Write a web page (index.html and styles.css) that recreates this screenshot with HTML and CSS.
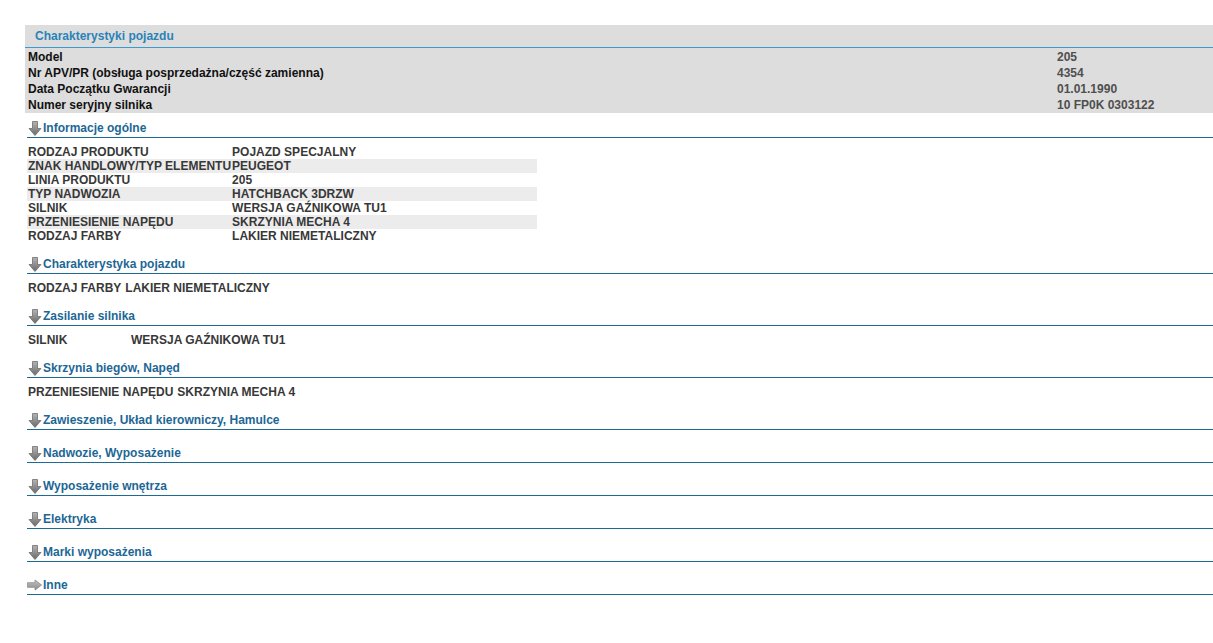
FILE: index.html
```html
<!DOCTYPE html>
<html lang="pl">
<head>
<meta charset="utf-8">
<title>Charakterystyki pojazdu</title>
<link rel="stylesheet" href="styles.css">
</head>
<body>
<div class="page">
  <div class="panel">
    <div class="panel-title">Charakterystyki pojazdu</div>
    <div class="panel-rows">
      <div class="pk">Model</div><div class="pv">205</div>
      <div class="pk">Nr APV/PR (obsługa posprzedażna/część zamienna)</div><div class="pv">4354</div>
      <div class="pk">Data Początku Gwarancji</div><div class="pv">01.01.1990</div>
      <div class="pk">Numer seryjny silnika</div><div class="pv">10 FP0K 0303122</div>
    </div>
  </div>

  <div class="section first">
    <div class="heading"><svg class="ico" viewBox="0 0 14 15"><use href="#down"/></svg><span>Informacje ogólne</span></div>
    <div class="body">
      <table class="data wide">
        <tr><td>RODZAJ PRODUKTU</td><td>POJAZD SPECJALNY</td></tr>
        <tr><td>ZNAK HANDLOWY/TYP ELEMENTU</td><td>PEUGEOT</td></tr>
        <tr><td>LINIA PRODUKTU</td><td>205</td></tr>
        <tr><td>TYP NADWOZIA</td><td>HATCHBACK 3DRZW</td></tr>
        <tr><td>SILNIK</td><td>WERSJA GAŹNIKOWA TU1</td></tr>
        <tr><td>PRZENIESIENIE NAPĘDU</td><td>SKRZYNIA MECHA 4</td></tr>
        <tr><td>RODZAJ FARBY</td><td>LAKIER NIEMETALICZNY</td></tr>
      </table>
    </div>
  </div>

  <div class="section">
    <div class="heading"><svg class="ico" viewBox="0 0 14 15"><use href="#down"/></svg><span>Charakterystyka pojazdu</span></div>
    <div class="body">
      <table class="data"><tr><td>RODZAJ FARBY</td><td class="gap">LAKIER NIEMETALICZNY</td></tr></table>
    </div>
  </div>

  <div class="section">
    <div class="heading"><svg class="ico" viewBox="0 0 14 15"><use href="#down"/></svg><span>Zasilanie silnika</span></div>
    <div class="body">
      <table class="data"><tr><td class="k103">SILNIK</td><td>WERSJA GAŹNIKOWA TU1</td></tr></table>
    </div>
  </div>

  <div class="section">
    <div class="heading"><svg class="ico" viewBox="0 0 14 15"><use href="#down"/></svg><span>Skrzynia biegów, Napęd</span></div>
    <div class="body">
      <table class="data"><tr><td>PRZENIESIENIE NAPĘDU</td><td class="gap">SKRZYNIA MECHA 4</td></tr></table>
    </div>
  </div>

  <div class="section">
    <div class="heading"><svg class="ico" viewBox="0 0 14 15"><use href="#down"/></svg><span>Zawieszenie, Układ kierowniczy, Hamulce</span></div>
    <div class="body empty"></div>
  </div>

  <div class="section">
    <div class="heading"><svg class="ico" viewBox="0 0 14 15"><use href="#down"/></svg><span>Nadwozie, Wyposażenie</span></div>
    <div class="body empty"></div>
  </div>

  <div class="section">
    <div class="heading"><svg class="ico" viewBox="0 0 14 15"><use href="#down"/></svg><span>Wyposażenie wnętrza</span></div>
    <div class="body empty"></div>
  </div>

  <div class="section">
    <div class="heading"><svg class="ico" viewBox="0 0 14 15"><use href="#down"/></svg><span>Elektryka</span></div>
    <div class="body empty"></div>
  </div>

  <div class="section">
    <div class="heading"><svg class="ico" viewBox="0 0 14 15"><use href="#down"/></svg><span>Marki wyposażenia</span></div>
    <div class="body empty"></div>
  </div>

  <div class="section">
    <div class="heading"><svg class="ico right" viewBox="0 0 16 12"><use href="#right"/></svg><span>Inne</span></div>
    <div class="body empty"></div>
  </div>
</div>

<svg class="defs" width="0" height="0" aria-hidden="true">
  <defs>
    <linearGradient id="gd" x1="0" y1="0" x2="0" y2="1">
      <stop offset="0" stop-color="#b4b4b4"/>
      <stop offset="1" stop-color="#6a6a6a"/>
    </linearGradient>
    <linearGradient id="gr" x1="0" y1="0" x2="0" y2="1">
      <stop offset="0" stop-color="#c4c4c4"/>
      <stop offset="1" stop-color="#8a8a8a"/>
    </linearGradient>
    <symbol id="down" viewBox="0 0 14 15">
      <path d="M4.5 0.5 H9.5 V7.5 H13 L7 14.5 L1 7.5 H4.5 Z" fill="url(#gd)" stroke="#6f6f6f" stroke-width="0.8" stroke-linejoin="round"/>
    </symbol>
    <symbol id="right" viewBox="0 0 16 12">
      <path d="M0.5 3.5 H8.5 V0.5 L15.5 6 L8.5 11.5 V8.5 H0.5 Z" fill="url(#gr)" stroke="#8a8a8a" stroke-width="0.8" stroke-linejoin="round"/>
    </symbol>
  </defs>
</svg>
</body>
</html>
```
FILE: styles.css
```css
html, body {
  margin: 0;
  padding: 0;
  background: #ffffff;
}

body {
  font-family: "Liberation Sans", Arial, sans-serif;
  font-size: 12px;
  font-weight: bold;
}

.page {
  padding: 25px 0 30px 25px;
}

.panel {
  background: #dddddd;
}

.panel-title {
  color: #2a83b8;
  line-height: 16px;
  padding: 3px 0 3px 10px;
  border-bottom: 1px solid #3b9ace;
}

.panel-rows {
  display: grid;
  grid-template-columns: 1fr 156px;
  padding: 1px 0 0 3px;
  line-height: 16px;
}

.pk {
  color: #111111;
}

.pv {
  color: #4f4f4f;
}

.section {
  margin-left: 2px;
  margin-top: 7px;
}

.section.first {
  margin-top: 0;
}

.heading {
  display: flex;
  align-items: center;
  padding: 7px 0 1px 1px;
  line-height: 16px;
  border-bottom: 1px solid #1f6a94;
  color: #1d6795;
}

.ico {
  width: 14px;
  height: 15px;
  margin-right: 1px;
  display: block;
}

.ico.right {
  width: 15px;
  height: 12px;
  margin-left: -1px;
  margin-right: 1px;
}

.body {
  padding-top: 7px;
  margin-bottom: -1px;
}

.body.empty {
  padding-top: 0;
  margin-bottom: 0;
  height: 1px;
}

.data {
  border-collapse: collapse;
  color: #383838;
  font-size: 12px;
}

.data.wide {
  width: 510px;
}

.data td {
  padding: 0 0 0 1px;
  line-height: 14px;
  height: 14px;
  white-space: nowrap;
  vertical-align: middle;
}

.data.wide td:first-child {
  width: 1px;
}

.data.wide tr:nth-child(even) {
  background: #ececec;
}

.data td.gap {
  padding-left: 4px;
}

.data td.k103 {
  width: 102px;
}

.defs {
  position: absolute;
  width: 0;
  height: 0;
  overflow: hidden;
}
```
